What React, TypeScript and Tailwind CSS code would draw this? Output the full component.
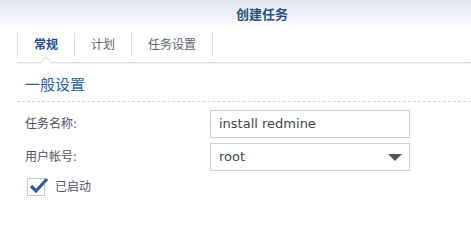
const font = { fontFamily: '"DejaVu Sans", "Noto Sans CJK SC", sans-serif' };

function Tab({ label, active }: { label: string; active?: boolean }) {
  return (
    <div
      className={`relative flex h-[24px] items-center border-r border-[#d5dde6] px-[16px] text-[12px] ${
        active ? 'font-bold text-[#1d4f8f]' : 'text-[#5a6470]'
      }`}
    >
      {label}
    </div>
  );
}

export default function App() {
  return (
    <div className="h-[249px] w-[471px] overflow-hidden bg-white" style={font}>
      {/* Header */}
      <div className="flex h-[30px] items-center bg-gradient-to-b from-[#dfe5ee] to-white pl-[236px]">
        <span className="text-[13px] font-bold text-[#2b4f7d]">创建任务</span>
      </div>

      {/* Tabs */}
      <div className="ml-[17px] mt-[3px]">
        <div className="flex border-l border-[#d5dde6]">
          <Tab label="常规" active />
          <Tab label="计划" />
          <Tab label="任务设置" />
        </div>
        <div className="relative mt-[5px] h-[1px] bg-[#d6dadf] shadow-[0_1px_1px_rgba(0,0,0,0.06)]">
          <div className="absolute left-[25px] top-[-4px] h-[8px] w-[8px] rotate-45 border-l border-t border-[#d6dadf] bg-white" />
        </div>
      </div>

      {/* Section */}
      <div className="ml-[17px] mt-[12px]">
        <div className="pl-[8px] text-[15px] leading-[20px] text-[#2a65a8]">一般设置</div>
        <div className="mt-[6px] border-t border-dashed border-[#c9d7e6]" />
      </div>

      {/* Form */}
      <div className="mt-[8px] flex flex-col gap-[5px] pl-[25px]">
        <div className="flex items-center">
          <div className="w-[185px] text-[12px] text-[#4a545f]">任务名称:</div>
          <div className="flex h-[28px] w-[200px] items-center border border-[#c8d1db] px-[8px] text-[13px] text-[#3d4650]">
            install redmine
          </div>
        </div>
        <div className="flex items-center">
          <div className="w-[185px] text-[12px] text-[#4a545f]">用户帐号:</div>
          <div className="flex h-[28px] w-[200px] items-center justify-between border border-[#c8d1db] pl-[8px] pr-[7px] text-[13px] text-[#3d4650]">
            <span>root</span>
            <svg width="14" height="7" viewBox="0 0 14 7">
              <path d="M0 0 H14 L7 7 Z" fill="#4d5661" />
            </svg>
          </div>
        </div>
      </div>

      <div className="mt-[7px] flex items-center pl-[27px]">
        <div className="relative h-[18px] w-[18px] border border-[#c2cad4] bg-white">
          <svg className="absolute left-[1px] top-[-2px]" width="20" height="18" viewBox="0 0 20 18">
            <path d="M2 9 L7 14 L18 2" fill="none" stroke="#2d5d9e" strokeWidth="3.2" strokeLinejoin="miter" />
          </svg>
        </div>
        <span className="ml-[10px] text-[12px] text-[#4a545f]">已启动</span>
      </div>
    </div>
  );
}
